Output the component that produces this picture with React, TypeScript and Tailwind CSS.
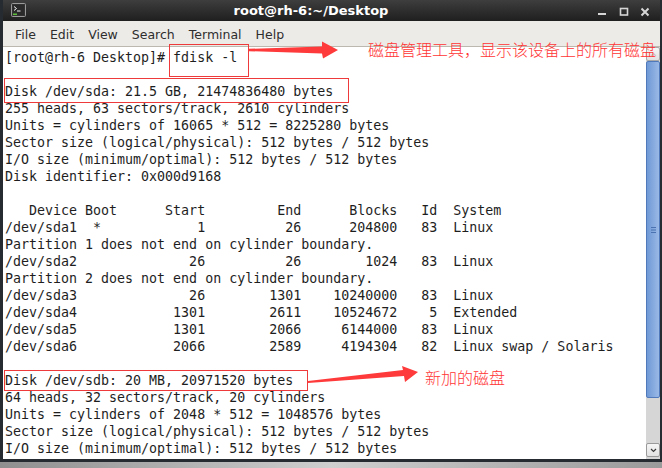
import React from "react";

const part = (
  dev: string,
  boot: string,
  start: string,
  end: string,
  blocks: string,
  id: string,
  sys: string
) =>
  dev.padEnd(9) +
  "  " +
  boot +
  start.padStart(13) +
  end.padStart(12) +
  blocks.padStart(12) +
  id.padStart(5) +
  "  " +
  sys;

const header =
  "Device".padStart(9) +
  " Boot" +
  "Start".padStart(11) +
  "End".padStart(12) +
  "Blocks".padStart(12) +
  "Id".padStart(5) +
  "  System";

const lines: string[] = [
  "[root@rh-6 Desktop]# fdisk -l",
  "",
  "Disk /dev/sda: 21.5 GB, 21474836480 bytes",
  "255 heads, 63 sectors/track, 2610 cylinders",
  "Units = cylinders of 16065 * 512 = 8225280 bytes",
  "Sector size (logical/physical): 512 bytes / 512 bytes",
  "I/O size (minimum/optimal): 512 bytes / 512 bytes",
  "Disk identifier: 0x000d9168",
  "",
  header,
  part("/dev/sda1", "*", "1", "26", "204800", "83", "Linux"),
  "Partition 1 does not end on cylinder boundary.",
  part("/dev/sda2", " ", "26", "26", "1024", "83", "Linux"),
  "Partition 2 does not end on cylinder boundary.",
  part("/dev/sda3", " ", "26", "1301", "10240000", "83", "Linux"),
  part("/dev/sda4", " ", "1301", "2611", "10524672", "5", "Extended"),
  part("/dev/sda5", " ", "1301", "2066", "6144000", "83", "Linux"),
  part("/dev/sda6", " ", "2066", "2589", "4194304", "82", "Linux swap / Solaris"),
  "",
  "Disk /dev/sdb: 20 MB, 20971520 bytes",
  "64 heads, 32 sectors/track, 20 cylinders",
  "Units = cylinders of 2048 * 512 = 1048576 bytes",
  "Sector size (logical/physical): 512 bytes / 512 bytes",
  "I/O size (minimum/optimal): 512 bytes / 512 bytes",
];

const menu = ["File", "Edit", "View", "Search", "Terminal", "Help"];

function TermIcon() {
  return (
    <svg width="15" height="14" viewBox="0 0 15 14">
      <rect x="0.5" y="0.5" width="14" height="13" rx="1" fill="#3b3b3b" stroke="#9a9a9a" />
      <rect x="1.5" y="1.5" width="12" height="11" fill="#2a2a2a" />
      <path d="M3 3.5 L5.5 5.5 L3 7.5" stroke="#f0f0f0" strokeWidth="1" fill="none" />
      <path d="M6 8 H9.5" stroke="#f0f0f0" strokeWidth="1" />
      <rect x="2" y="10.5" width="4" height="1.5" fill="#5fbf3a" />
    </svg>
  );
}

function Controls() {
  return (
    <div className="flex items-center h-full w-[64px]">
      <svg width="64" height="21" viewBox="0 0 64 21">
        <rect x="2" y="13" width="8" height="2" fill="#d6d6d6" />
        <rect x="24.5" y="8.5" width="7" height="6.5" fill="none" stroke="#d6d6d6" strokeWidth="1.6" />
        <path d="M45.5 8.5 L52.5 15.5 M52.5 8.5 L45.5 15.5" stroke="#d6d6d6" strokeWidth="2" />
      </svg>
    </div>
  );
}

export default function App() {
  return (
    <div className="relative w-[662px] h-[468px] overflow-hidden flex flex-col bg-gradient-to-r from-[#8f8f8f] via-[#cfcfcf] to-[#9a9a9a]">
      <div className="h-[462px] flex flex-col border-l-[3px] border-r-[2px] border-b-[3px] border-[#262a31] bg-[#262a31]">
        {/* title bar */}
        <div className="h-[21px] flex items-center bg-gradient-to-b from-[#3e3e3e] to-[#1f1f1f]">
          <div className="w-[23px] flex justify-end pb-[1px]">
            <TermIcon />
          </div>
          <div
            className="flex-1 text-center text-[13px] font-bold text-white leading-none pb-[1px]"
            style={{ fontFamily: '"DejaVu Sans", sans-serif' }}
          >
            root@rh-6:~/Desktop
          </div>
          <Controls />
        </div>
        {/* menu bar */}
        <div
          className="h-[26px] flex items-center pl-[5px] pt-[4px] bg-[#edebe8] border-b border-[#bcb8b0] text-[12.5px] text-[#2e2e2e]"
          style={{ fontFamily: '"DejaVu Sans", sans-serif' }}
        >
          {menu.map((m) => (
            <span key={m} className="px-[7px]">
              {m}
            </span>
          ))}
        </div>
        {/* terminal */}
        <div className="flex-1 flex min-h-0">
          <div
            className="flex-1 min-w-0 bg-white pt-[2px] pl-[2px] text-[13.3px] leading-[17px] text-[#1e1e1e] whitespace-pre overflow-hidden"
            style={{ fontFamily: '"DejaVu Sans Mono", monospace' }}
          >
            {lines.map((l, i) => (
              <div key={i} className="h-[17px]">
                {l}
              </div>
            ))}
          </div>
          {/* scrollbar */}
          <div className="w-[14px] shrink-0 flex flex-col bg-[#d6d6d6]">
            <div className="h-[14px] shrink-0 bg-gradient-to-b from-[#f6f6f6] to-[#e2e2e2] border border-[#a9a9a9] rounded-[2px] flex items-center justify-center">
              <svg width="7" height="5" viewBox="0 0 7 5">
                <path d="M1 4 L3.5 1.5 L6 4" stroke="#c8c8c8" strokeWidth="1.2" fill="none" />
              </svg>
            </div>
            <div className="h-[337px] shrink-0 bg-gradient-to-r from-[#6f99d6] to-[#9ab9e6] border border-[#4f79ba] rounded-[2px] flex items-center justify-center">
              <svg width="5" height="6" viewBox="0 0 5 6">
                <path d="M0 0.5 H5 M0 3 H5 M0 5.5 H5" stroke="#4a72b0" strokeWidth="1" />
              </svg>
            </div>
            <div className="flex-1" />
            <div className="h-[14px] shrink-0 mb-[2px] bg-gradient-to-b from-[#f6f6f6] to-[#e2e2e2] border border-[#9a9a9a] rounded-[2px] flex items-center justify-center">
              <svg width="7" height="5" viewBox="0 0 7 5">
                <path d="M1 1 L3.5 3.5 L6 1" stroke="#3a3a3a" strokeWidth="1.2" fill="none" />
              </svg>
            </div>
          </div>
        </div>
      </div>
      <div className="flex-1" />

      {/* annotations */}
      <div className="absolute left-[169px] top-[44px] w-[80px] h-[33px] border border-[#ee3a3a]" />
      <div className="absolute left-[4px] top-[78px] w-[345px] h-[25px] border border-[#ee3a3a]" />
      <div className="absolute left-[4px] top-[370px] w-[304px] h-[21px] border border-[#ee3a3a]" />
      <svg className="absolute left-0 top-0 pointer-events-none" width="662" height="468" viewBox="0 0 662 468">
        <polygon
          points="249,48.8 322,46.5 322,41.5 338,50 323,58.5 322,53.5 249,51.2"
          fill="#ff3a3a"
        />
        <polygon
          points="308,381 403,370 402,366 418,372 405,382 404,376 308,383"
          fill="#ff3a3a"
        />
      </svg>
      <div
        className="absolute left-[368px] top-[41px] text-[16px] leading-none font-light text-[#ff3535] whitespace-nowrap"
        style={{ fontFamily: '"Noto Sans CJK SC", sans-serif' }}
      >
        磁盘管理工具，显示该设备上的所有磁盘
      </div>
      <div
        className="absolute left-[425px] top-[369px] text-[16px] leading-none font-light text-[#ff3535] whitespace-nowrap"
        style={{ fontFamily: '"Noto Sans CJK SC", sans-serif' }}
      >
        新加的磁盘
      </div>
    </div>
  );
}
